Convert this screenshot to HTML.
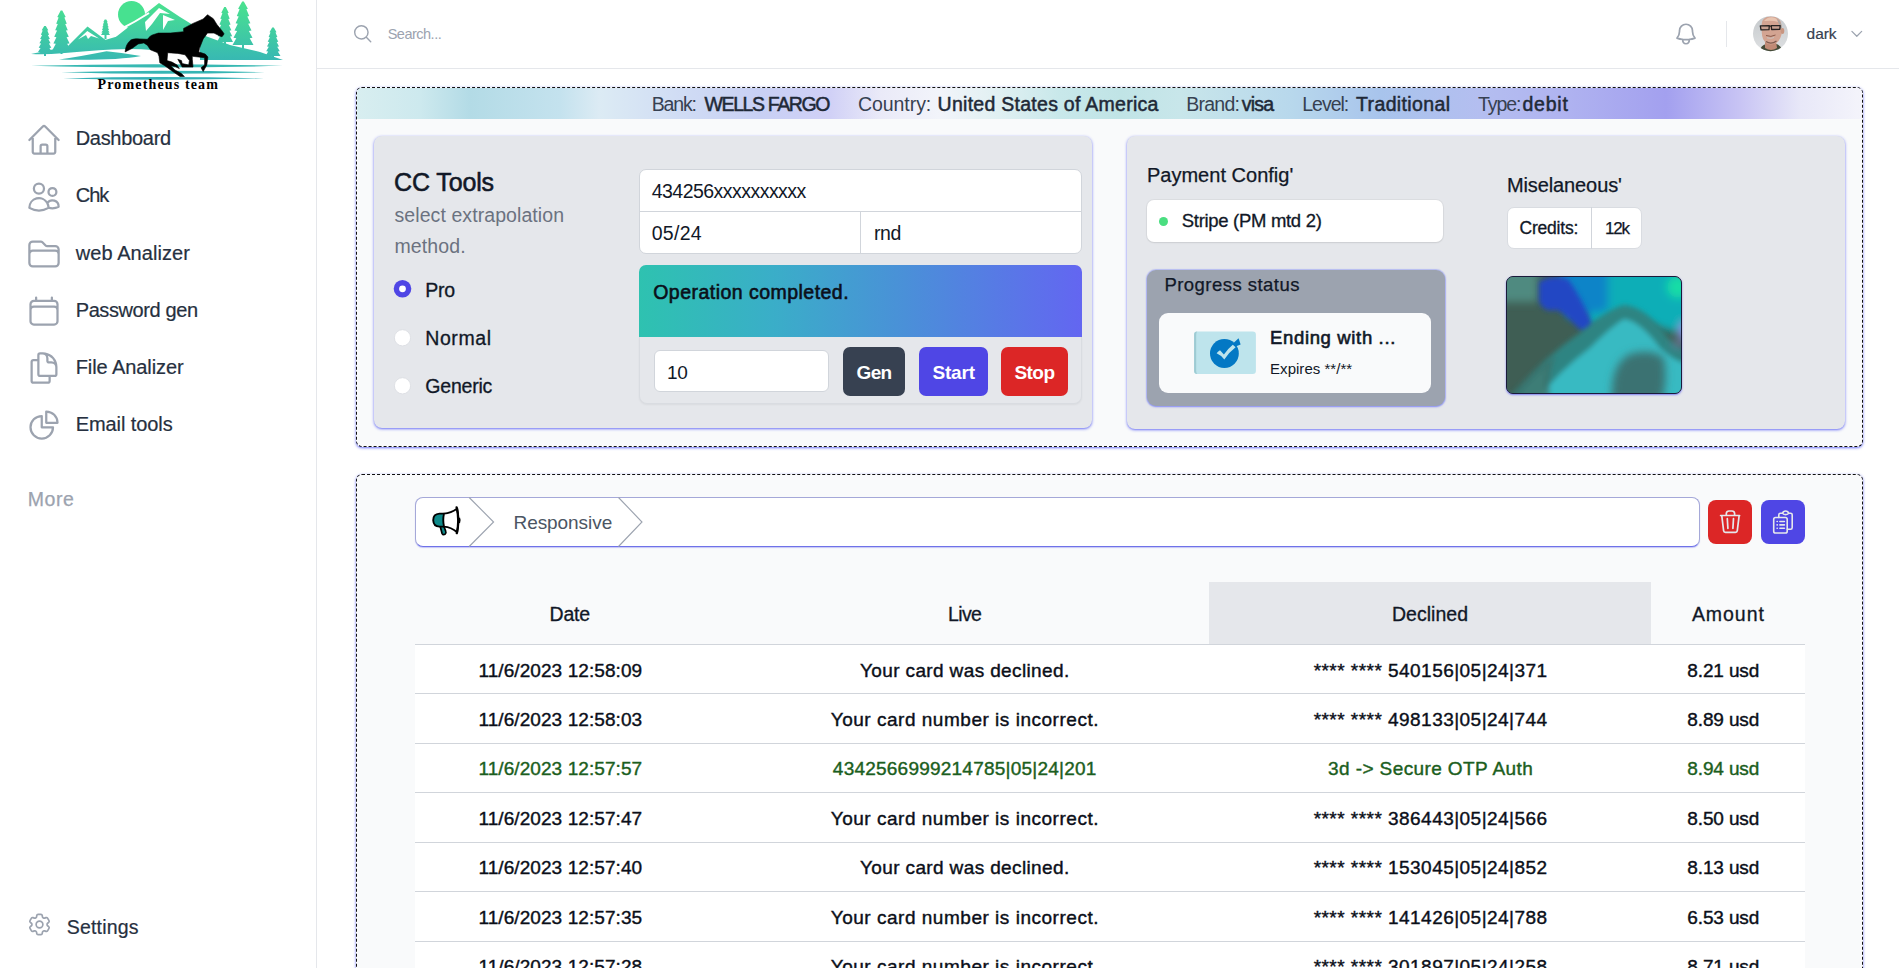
<!DOCTYPE html><html><head><meta charset="utf-8"><style>
html,body{margin:0;padding:0;width:1899px;height:968px;overflow:hidden;background:#fff;font-family:"Liberation Sans",sans-serif;}
.t{position:absolute;line-height:1;white-space:nowrap;}
.b{position:absolute;box-sizing:border-box;}
svg{position:absolute;overflow:visible;}
</style></head><body>
<div class="b" style="left:316px;top:0px;width:1px;height:968px;background:#e5e7eb;"></div>
<div class="b" style="left:317px;top:68px;width:1582px;height:1px;background:#e5e7eb;"></div>
<div class="t" style="left:75.70px;top:128.27px;font-size:20px;color:#263040;letter-spacing:-0.293px;-webkit-text-stroke:0.2px #263040;">Dashboard</div>
<svg style="left:26px;top:122px;" width="36" height="36" viewBox="0 0 24 24" fill="none" stroke="#9ca3af" stroke-width="1.5" stroke-linecap="round" stroke-linejoin="round"><path d="m2.25 12 8.954-8.955c.44-.439 1.152-.439 1.591 0L21.75 12M4.5 9.75v10.125c0 .621.504 1.125 1.125 1.125H9.75v-4.875c0-.621.504-1.125 1.125-1.125h2.25c.621 0 1.125.504 1.125 1.125V21h4.125c.621 0 1.125-.504 1.125-1.125V9.75M8.25 21h8.25"/></svg>
<div class="t" style="left:75.70px;top:185.41px;font-size:20px;color:#263040;letter-spacing:-0.984px;-webkit-text-stroke:0.2px #263040;">Chk</div>
<svg style="left:26px;top:179px;" width="36" height="36" viewBox="0 0 24 24" fill="none" stroke="#9ca3af" stroke-width="1.5" stroke-linecap="round" stroke-linejoin="round"><path d="M15 19.128a9.38 9.38 0 0 0 2.625.372 9.337 9.337 0 0 0 4.121-.952 4.125 4.125 0 0 0-7.533-2.493M15 19.128v-.003c0-1.113-.285-2.16-.786-3.07M15 19.128v.106A12.318 12.318 0 0 1 8.624 21c-2.331 0-4.512-.645-6.374-1.766l-.001-.109a6.375 6.375 0 0 1 11.964-3.07M12 6.375a3.375 3.375 0 1 1-6.75 0 3.375 3.375 0 0 1 6.75 0Zm8.25 2.25a2.625 2.625 0 1 1-5.25 0 2.625 2.625 0 0 1 5.25 0Z"/></svg>
<div class="t" style="left:75.70px;top:242.55px;font-size:20px;color:#263040;letter-spacing:0.082px;-webkit-text-stroke:0.2px #263040;">web Analizer</div>
<svg style="left:26px;top:236px;" width="36" height="36" viewBox="0 0 24 24" fill="none" stroke="#9ca3af" stroke-width="1.5" stroke-linecap="round" stroke-linejoin="round"><path d="M2.25 12.75V12A2.25 2.25 0 0 1 4.5 9.75h15A2.25 2.25 0 0 1 21.75 12v.75m-8.69-6.44-2.12-2.12a1.5 1.5 0 0 0-1.061-.44H4.5A2.25 2.25 0 0 0 2.25 6v12a2.25 2.25 0 0 0 2.25 2.25h15A2.25 2.25 0 0 0 21.75 18V9a2.25 2.25 0 0 0-2.25-2.25h-5.379a1.5 1.5 0 0 1-1.06-.44Z"/></svg>
<div class="t" style="left:75.70px;top:299.69px;font-size:20px;color:#263040;letter-spacing:-0.395px;-webkit-text-stroke:0.2px #263040;">Password gen</div>
<svg style="left:26px;top:293px;" width="36" height="36" viewBox="0 0 24 24" fill="none" stroke="#9ca3af" stroke-width="1.5" stroke-linecap="round" stroke-linejoin="round"><path d="M6.75 3v2.25M17.25 3v2.25M3 18.75V7.5a2.25 2.25 0 0 1 2.25-2.25h13.5A2.25 2.25 0 0 1 21 7.5v11.25m-18 0A2.25 2.25 0 0 0 5.25 21h13.5A2.25 2.25 0 0 0 21 18.75m-18 0v-7.5A2.25 2.25 0 0 1 5.25 9h13.5A2.25 2.25 0 0 1 21 11.25v7.5"/></svg>
<div class="t" style="left:75.70px;top:356.83px;font-size:20px;color:#263040;letter-spacing:-0.078px;-webkit-text-stroke:0.2px #263040;">File Analizer</div>
<svg style="left:26px;top:350px;" width="36" height="36" viewBox="0 0 24 24" fill="none" stroke="#9ca3af" stroke-width="1.5" stroke-linecap="round" stroke-linejoin="round"><path d="M15.75 17.25v3.375c0 .621-.504 1.125-1.125 1.125h-9.75a1.125 1.125 0 0 1-1.125-1.125V7.875c0-.621.504-1.125 1.125-1.125H6.75a9.06 9.06 0 0 1 1.5.124m7.5 10.376h3.375c.621 0 1.125-.504 1.125-1.125V11.25c0-4.46-3.243-8.161-7.5-8.876a9.06 9.06 0 0 0-1.5-.124H9.375c-.621 0-1.125.504-1.125 1.125v3.5m7.5 10.375H9.375a1.125 1.125 0 0 1-1.125-1.125v-9.25m12 6.625v-1.875a3.375 3.375 0 0 0-3.375-3.375h-1.5a1.125 1.125 0 0 1-1.125-1.125v-1.5a3.375 3.375 0 0 0-3.375-3.375H9.75"/></svg>
<div class="t" style="left:75.70px;top:413.97px;font-size:20px;color:#263040;letter-spacing:-0.082px;-webkit-text-stroke:0.2px #263040;">Email tools</div>
<svg style="left:26px;top:407px;" width="36" height="36" viewBox="0 0 24 24" fill="none" stroke="#9ca3af" stroke-width="1.5" stroke-linecap="round" stroke-linejoin="round"><path d="M10.5 6a7.5 7.5 0 1 0 7.5 7.5h-7.5V6Z M13.5 10.5H21A7.5 7.5 0 0 0 13.5 3v7.5Z"/></svg>
<div class="t" style="left:27.80px;top:489.99px;font-size:19.5px;color:#9ca3af;letter-spacing:0.523px;-webkit-text-stroke:0.25px #9ca3af;">More</div>
<div class="t" style="left:66.80px;top:918.39px;font-size:19.5px;color:#263040;letter-spacing:0.163px;-webkit-text-stroke:0.2px #263040;">Settings</div>
<svg style="left:25.85px;top:910.5px;" width="27" height="27" viewBox="0 0 24 24" fill="none" stroke="#9ca3af" stroke-width="1.5" stroke-linecap="round" stroke-linejoin="round"><path d="M9.594 3.94c.09-.542.56-.94 1.11-.94h2.593c.55 0 1.02.398 1.11.94l.213 1.281c.063.374.313.686.645.87.074.04.147.083.22.127.325.196.72.257 1.075.124l1.217-.456a1.125 1.125 0 0 1 1.37.49l1.296 2.247a1.125 1.125 0 0 1-.26 1.431l-1.003.827c-.293.241-.438.613-.43.992a7.723 7.723 0 0 1 0 .255c-.008.378.137.75.43.991l1.004.827c.424.35.534.955.26 1.43l-1.298 2.247a1.125 1.125 0 0 1-1.369.491l-1.217-.456c-.355-.133-.75-.072-1.076.124a6.47 6.47 0 0 1-.22.128c-.331.183-.581.495-.644.869l-.213 1.281c-.09.543-.56.94-1.11.94h-2.594c-.55 0-1.019-.398-1.11-.94l-.213-1.281c-.062-.374-.312-.686-.644-.87a6.52 6.52 0 0 1-.22-.127c-.325-.196-.72-.257-1.076-.124l-1.217.456a1.125 1.125 0 0 1-1.369-.49l-1.297-2.247a1.125 1.125 0 0 1 .26-1.431l1.004-.827c.292-.24.437-.613.43-.991a6.932 6.932 0 0 1 0-.255c.007-.38-.138-.751-.43-.992l-1.004-.827a1.125 1.125 0 0 1-.26-1.43l1.297-2.247a1.125 1.125 0 0 1 1.37-.491l1.216.456c.356.133.751.072 1.076-.124.072-.044.146-.086.22-.128.332-.183.582-.495.644-.869l.214-1.28Z M15 12a3 3 0 1 1-6 0 3 3 0 0 1 6 0Z"/></svg>
<svg style="left:352.2px;top:22.9px;" width="21.4" height="21.4" viewBox="0 0 24 24" fill="none" stroke="#9ca3af" stroke-width="1.6" stroke-linecap="round" stroke-linejoin="round"><path d="m21 21-5.197-5.197m0 0A7.5 7.5 0 1 0 5.196 5.196a7.5 7.5 0 0 0 10.607 10.607Z"/></svg>
<div class="t" style="left:387.70px;top:27.43px;font-size:14.5px;color:#9ca3af;letter-spacing:-0.504px;">Search...</div>
<svg style="left:1673px;top:21px;" width="26" height="26" viewBox="0 0 24 24" fill="none" stroke="#9ca3af" stroke-width="1.6" stroke-linecap="round" stroke-linejoin="round"><path d="M14.857 17.082a23.848 23.848 0 0 0 5.454-1.31A8.967 8.967 0 0 1 18 9.75V9A6 6 0 0 0 6 9v.75a8.967 8.967 0 0 1-2.312 6.022c1.733.64 3.56 1.085 5.455 1.31m5.714 0a24.255 24.255 0 0 1-5.714 0m5.714 0a3 3 0 1 1-5.714 0"/></svg>
<div class="b" style="left:1726px;top:21px;width:1px;height:26px;background:#e5e7eb;"></div>
<div class="t" style="left:1806.60px;top:25.68px;font-size:15.5px;color:#374151;letter-spacing:-0.051px;-webkit-text-stroke:0.2px #374151;">dark</div>
<svg style="left:1849.4px;top:26.1px;" width="15.6" height="15.6" viewBox="0 0 24 24" fill="none" stroke="#9ca3af" stroke-width="1.9" stroke-linecap="round" stroke-linejoin="round"><path d="m19.5 8.25-7.5 7.5-7.5-7.5"/></svg>
<div class="b" style="left:356px;top:87px;width:1507px;height:360px;background:#f9fafb;border:1px dashed #111;border-radius:6px;box-shadow:0 1px 3px 0 rgba(110,115,245,.9),0 1px 2px -1px rgba(110,115,245,.9);"></div>
<div class="b" style="left:357px;top:88px;width:1505px;height:31px;border-radius:5px 5px 0 0;background:linear-gradient(90deg,#d8eef0 0.0%,#cde9ee 4.2%,#b3dbe6 7.5%,#c4e2ee 13.5%,#dcebf4 16.1%,#d0dcf4 21.5%,#c8d0f4 26.8%,#d0d0f6 31.4%,#eaeaf8 34.8%,#f2f4fa 38.7%,#e0f0f2 42.7%,#c8e8ea 46.7%,#c0e4e6 50.7%,#c8e6ea 54.7%,#b8d8ec 62.0%,#a8c4ec 68.0%,#b4bef0 74.6%,#b0b4f0 79.9%,#a3a0ef 87.0%,#c8c4f4 91.9%,#e8e8f8 95.9%,#f4f4fb 100.0%);"></div>
<div class="b" style="left:374px;top:136px;width:718px;height:292px;background:#e5e7eb;border-radius:8px;box-shadow:0 1px 3px 0 rgba(110,115,245,.9),0 1px 2px -1px rgba(110,115,245,.9);"></div>
<div class="b" style="left:1127px;top:136px;width:718px;height:293px;background:#e5e7eb;border-radius:8px;box-shadow:0 1px 3px 0 rgba(110,115,245,.9),0 1px 2px -1px rgba(110,115,245,.9);"></div>
<div class="b" style="left:356px;top:474px;width:1507px;height:520px;background:#f9fafb;border:1px dashed #111;border-radius:6px;box-shadow:0 1px 3px 0 rgba(110,115,245,.9),0 1px 2px -1px rgba(110,115,245,.9);"></div>
<div class="t" style="left:651.80px;top:94.59px;font-size:19.5px;color:#374151;letter-spacing:-1.191px;">Bank:</div>
<div class="t" style="left:704.50px;top:94.59px;font-size:19.5px;color:#1f2937;letter-spacing:-1.379px;-webkit-text-stroke:0.5px #1f2937;">WELLS FARGO</div>
<div class="t" style="left:857.90px;top:94.59px;font-size:19.5px;color:#374151;letter-spacing:-0.043px;">Country:</div>
<div class="t" style="left:937.60px;top:94.59px;font-size:19.5px;color:#1f2937;letter-spacing:0.269px;-webkit-text-stroke:0.5px #1f2937;">United States of America</div>
<div class="t" style="left:1186.20px;top:94.59px;font-size:19.5px;color:#374151;letter-spacing:-0.731px;">Brand:</div>
<div class="t" style="left:1241.70px;top:94.59px;font-size:19.5px;color:#1f2937;letter-spacing:-0.759px;-webkit-text-stroke:0.5px #1f2937;">visa</div>
<div class="t" style="left:1302.20px;top:94.59px;font-size:19.5px;color:#374151;letter-spacing:-0.987px;">Level:</div>
<div class="t" style="left:1356.00px;top:94.59px;font-size:19.5px;color:#1f2937;letter-spacing:0.368px;-webkit-text-stroke:0.5px #1f2937;">Traditional</div>
<div class="t" style="left:1477.90px;top:94.59px;font-size:19.5px;color:#374151;letter-spacing:-1.049px;">Type:</div>
<div class="t" style="left:1522.50px;top:94.59px;font-size:19.5px;color:#1f2937;letter-spacing:0.753px;-webkit-text-stroke:0.5px #1f2937;">debit</div>
<div class="t" style="left:394.10px;top:170.34px;font-size:25px;color:#111827;letter-spacing:-0.138px;-webkit-text-stroke:0.55px #111827;">CC Tools</div>
<div class="t" style="left:394.50px;top:205.69px;font-size:19.5px;color:#6b7280;letter-spacing:0.078px;">select extrapolation</div>
<div class="t" style="left:394.50px;top:236.79px;font-size:19.5px;color:#6b7280;letter-spacing:0.103px;">method.</div>
<svg style="left:390px;top:276px" width="26" height="26" viewBox="0 0 26 26"><circle cx="12.5" cy="12.8" r="8.8" fill="#4f46e5"/><circle cx="12.5" cy="12.8" r="3.4" fill="#fff"/></svg>
<svg style="left:390px;top:324.7px" width="26" height="26" viewBox="0 0 26 26"><circle cx="12.5" cy="12.8" r="8.1" fill="#fff" stroke="#d9dce1" stroke-width="0.8"/></svg>
<svg style="left:390px;top:372.9px" width="26" height="26" viewBox="0 0 26 26"><circle cx="12.5" cy="12.8" r="8.1" fill="#fff" stroke="#d9dce1" stroke-width="0.8"/></svg>
<div class="t" style="left:425.30px;top:281.09px;font-size:19.5px;color:#111827;letter-spacing:-0.228px;-webkit-text-stroke:0.3px #111827;">Pro</div>
<div class="t" style="left:425.30px;top:328.79px;font-size:19.5px;color:#111827;letter-spacing:0.571px;-webkit-text-stroke:0.3px #111827;">Normal</div>
<div class="t" style="left:425.30px;top:376.69px;font-size:19.5px;color:#111827;letter-spacing:-0.213px;-webkit-text-stroke:0.3px #111827;">Generic</div>
<div class="b" style="left:639px;top:169px;width:443px;height:85px;background:#fff;border:1px solid #d1d5db;border-radius:7px;"></div>
<div class="b" style="left:640px;top:211px;width:441px;height:1px;background:#d1d5db;"></div>
<div class="b" style="left:860px;top:212px;width:1px;height:41px;background:#d1d5db;"></div>
<div class="t" style="left:651.70px;top:181.69px;font-size:19.5px;color:#111827;letter-spacing:-0.531px;">434256xxxxxxxxxx</div>
<div class="t" style="left:651.70px;top:223.99px;font-size:19.5px;color:#111827;letter-spacing:0.300px;">05/24</div>
<div class="t" style="left:874.00px;top:223.99px;font-size:19.5px;color:#111827;letter-spacing:-0.423px;">rnd</div>
<div class="b" style="left:639px;top:265px;width:443px;height:72px;border-radius:7px 7px 0 0;background:linear-gradient(90deg,#2ec2b0 0%,#3aaec8 30%,#4a90d8 60%,#6366f1 100%);"></div>
<div class="t" style="left:653.20px;top:282.89px;font-size:19.5px;color:#0b0f19;letter-spacing:0.471px;-webkit-text-stroke:0.6px #0b0f19;">Operation completed.</div>
<div class="b" style="left:639px;top:337px;width:443px;height:67px;background:#e5e7eb;border:1px solid #d9dce1;border-top:none;border-radius:0 0 8px 8px;box-shadow:0 1px 2px rgba(0,0,0,.05);"></div>
<div class="b" style="left:653.5px;top:349.5px;width:175.5px;height:42.5px;background:#fff;border:1px solid #d1d5db;border-radius:6px;"></div>
<div class="t" style="left:667.10px;top:362.52px;font-size:19px;color:#111827;letter-spacing:-0.423px;">10</div>
<div class="b" style="left:843px;top:347px;width:62px;height:49px;background:#374151;border-radius:7px;"></div>
<div class="b" style="left:919px;top:347px;width:69px;height:49px;background:#4f46e5;border-radius:7px;"></div>
<div class="b" style="left:1001px;top:347px;width:67px;height:49px;background:#dc2626;border-radius:7px;"></div>
<div class="t" style="left:856.60px;top:362.92px;font-size:19px;color:#fff;letter-spacing:-0.726px;font-weight:700;">Gen</div>
<div class="t" style="left:932.40px;top:362.92px;font-size:19px;color:#fff;letter-spacing:-0.173px;font-weight:700;">Start</div>
<div class="t" style="left:1014.40px;top:362.92px;font-size:19px;color:#fff;letter-spacing:-0.538px;font-weight:700;">Stop</div>
<div class="t" style="left:1146.90px;top:165.27px;font-size:20px;color:#111827;letter-spacing:0.020px;-webkit-text-stroke:0.25px #111827;">Payment Config'</div>
<div class="b" style="left:1147px;top:200px;width:296px;height:42px;background:#fff;border-radius:7px;box-shadow:0 0 0 1px rgba(0,0,0,.04),0 1px 2px rgba(0,0,0,.08);"></div>
<div class="b" style="left:1158.8px;top:216.6px;width:9px;height:9px;border-radius:50%;background:#4ade80;"></div>
<div class="t" style="left:1181.80px;top:212.24px;font-size:18.5px;color:#111827;letter-spacing:-0.309px;-webkit-text-stroke:0.3px #111827;">Stripe (PM mtd 2)</div>
<div class="b" style="left:1146.5px;top:269.5px;width:298px;height:136.5px;background:#9ca3af;border-radius:9px;box-shadow:0 0 1px 1px rgba(129,140,248,.45),0 1px 2px rgba(99,102,241,.6);"></div>
<div class="t" style="left:1164.40px;top:276.04px;font-size:18.5px;color:#111827;letter-spacing:0.462px;-webkit-text-stroke:0.25px #111827;">Progress status</div>
<div class="b" style="left:1159px;top:313px;width:272px;height:80px;background:#f9fafb;border-radius:9px;"></div>
<svg style="left:1193px;top:331px" width="64" height="45" viewBox="0 0 64 45">
<rect x="1.1" y="0.5" width="61.8" height="42.4" rx="3.2" fill="#bee4ec"/>
<path d="M4.3,0.5 Q1.1,0.5 1.1,3.7 V39.7 Q1.1,42.9 4.3,42.9 Q3.2,42 3.2,39.7 V3.7 Q3.2,1.2 4.3,0.5Z" fill="#9ecbd3"/>
<circle cx="31.4" cy="22.5" r="14.4" fill="#0378c4"/>
<path d="M23.6,22.2 Q25.2,20.4 27,19.2 L30.9,23.6 Q35,17.6 39.8,13.8 L42.6,16.2 Q36.2,21 31.3,28.4 Q28.2,24.2 23.6,22.2Z" fill="#bee4ec"/>
<path d="M39.6,12.8 L45.6,7.2 L47.6,13.6 L43.2,15.2Z" fill="#0378c4"/>
</svg>
<div class="t" style="left:1270.10px;top:328.94px;font-size:18.5px;color:#111827;letter-spacing:0.643px;-webkit-text-stroke:0.6px #111827;">Ending with ...</div>
<div class="t" style="left:1270.10px;top:361.10px;font-size:15px;color:#111827;letter-spacing:0.025px;">Expires **/**</div>
<div class="t" style="left:1506.90px;top:174.87px;font-size:20px;color:#111827;letter-spacing:-0.101px;-webkit-text-stroke:0.25px #111827;">Miselaneous'</div>
<div class="b" style="left:1507px;top:206.5px;width:135px;height:42.5px;background:#fff;border:1px solid #d9dce1;border-radius:7px;"></div>
<div class="b" style="left:1591px;top:207px;width:1px;height:41.5px;background:#d1d5db;"></div>
<div class="t" style="left:1519.60px;top:219.69px;font-size:17.5px;color:#111827;letter-spacing:-0.228px;-webkit-text-stroke:0.3px #111827;">Credits:</div>
<div class="t" style="left:1604.90px;top:220.11px;font-size:17px;color:#111827;letter-spacing:-1.155px;-webkit-text-stroke:0.25px #111827;">12k</div>
<div class="b" style="left:415px;top:497px;width:1285px;height:50px;background:#fff;border:1px solid #a5a8d8;border-bottom-color:#6f72e8;border-radius:8px;box-shadow:0 1px 1px rgba(99,102,241,.35);"></div>
<svg style="left:415px;top:497px" width="240" height="50" viewBox="0 0 240 50">
<path d="M54.2 0.5 L78.6 25 L54.2 49.5" fill="none" stroke="#9ca3af" stroke-width="1.1"/>
<path d="M203.5 0.5 L227 25 L203.5 49.5" fill="none" stroke="#9ca3af" stroke-width="1.1"/>
</svg>
<svg style="left:430px;top:505px" width="34" height="32" viewBox="0 0 34 32">
<path d="M10.3,21.8 L12,28.3 Q13,30.3 15,29.3 Q16.5,28.3 15.8,26.5 L14,21.5" fill="#0e8a8a" stroke="#000" stroke-width="1.7" stroke-linejoin="round"/>
<path d="M14,8.6 L9.5,8.6 Q3.2,9 3.2,15.2 Q3.5,21.5 9.5,21.6 L14,21.6 Z" fill="#0e8a8a" stroke="#000" stroke-width="1.9" stroke-linejoin="round"/>
<path d="M14,8.6 Q21,8.3 27.2,3.5 Q29.5,15 27.2,27.3 Q21,22 14,21.6 Q12.5,15 14,8.6 Z" fill="#fff" stroke="#000" stroke-width="1.9" stroke-linejoin="round"/>
<path d="M26.6,2.3 Q29.8,15 26.8,28.2" fill="none" stroke="#000" stroke-width="2.3" stroke-linecap="round"/>
<path d="M29.2,12.8 Q30.4,15.2 29.2,18" fill="none" stroke="#000" stroke-width="1.8"/>
</svg>
<div class="t" style="left:513.50px;top:512.52px;font-size:19px;color:#4b5563;letter-spacing:-0.064px;">Responsive</div>
<div class="b" style="left:1708px;top:500px;width:44px;height:44px;background:#dc2626;border-radius:8px;"></div>
<div class="b" style="left:1761px;top:500px;width:44px;height:44px;background:#4f46e5;border-radius:8px;"></div>
<svg style="left:1718px;top:510px" width="24" height="24" viewBox="0 0 24 24" fill="none" stroke="#e5e7eb" stroke-width="1.7" stroke-linecap="round" stroke-linejoin="round">
<path d="M2.6 5.5 H21.6 M3.8 5.8 L5.6 20.6 Q5.8 22.3 7.4 22.3 H17.5 Q19.1 22.3 19.3 20.6 L21.1 5.8 M8.3 5.2 V3.4 Q8.6 1 11 1 H14 Q16.4 1 16.6 3.4 V5.2 M9.3 8.6 L9.9 18.4 M15.5 8.6 L14.9 18.4"/>
</svg>
<svg style="left:1771px;top:510px" width="24" height="24" viewBox="0 0 24 24" fill="none" stroke="#e5e7eb" stroke-width="1.6" stroke-linecap="round" stroke-linejoin="round">
<path d="M7.8 7.4 V4.8 Q7.8 3.2 9.4 3.2 H11.6 Q12.2 1 14.6 1 Q17 1 17.6 3.2 H19.6 Q21.2 3.2 21.2 4.8 V17.6 Q21.2 19.3 19.6 19.3 H16.4"/>
<path d="M11.7 3.4 Q12 4.6 14.6 4.6 Q17.2 4.6 17.5 3.4"/>
<rect x="2.7" y="7.5" width="13.5" height="15.5" rx="1.8"/>
<path d="M6.1 11.5 H6.3 M8.9 11.5 H13.4 M6.1 14.9 H6.3 M8.9 14.9 H13.4 M6.1 18.3 H6.3 M8.9 18.3 H13.4"/>
</svg>
<div class="b" style="left:1209px;top:582px;width:442px;height:62px;background:#e5e7eb;"></div>
<div class="b" style="left:415px;top:644px;width:1390px;height:330px;background:#fff;"></div>
<div class="t" style="left:549.50px;top:605.09px;font-size:19.5px;color:#111827;letter-spacing:-0.164px;-webkit-text-stroke:0.3px #111827;">Date</div>
<div class="t" style="left:948.10px;top:605.09px;font-size:19.5px;color:#111827;letter-spacing:-0.691px;-webkit-text-stroke:0.3px #111827;">Live</div>
<div class="t" style="left:1391.90px;top:605.09px;font-size:19.5px;color:#111827;letter-spacing:0.032px;-webkit-text-stroke:0.3px #111827;">Declined</div>
<div class="t" style="left:1691.90px;top:605.09px;font-size:19.5px;color:#111827;letter-spacing:0.959px;-webkit-text-stroke:0.3px #111827;">Amount</div>
<div class="b" style="left:415px;top:644px;width:1390px;height:1px;background:#d1d5db;"></div>
<div class="t" style="left:478.40px;top:660.52px;font-size:19px;color:#0b0f19;letter-spacing:0.085px;-webkit-text-stroke:0.4px #0b0f19;">11/6/2023 12:58:09</div>
<div class="t" style="left:860.00px;top:660.52px;font-size:19px;color:#0b0f19;letter-spacing:0.371px;-webkit-text-stroke:0.4px #0b0f19;">Your card was declined.</div>
<div class="t" style="left:1313.65px;top:660.52px;font-size:19px;color:#0b0f19;letter-spacing:0.465px;-webkit-text-stroke:0.4px #0b0f19;">**** **** 540156|05|24|371</div>
<div class="t" style="left:1687.30px;top:660.52px;font-size:19px;color:#0b0f19;letter-spacing:-0.128px;-webkit-text-stroke:0.4px #0b0f19;">8.21 usd</div>
<div class="b" style="left:415px;top:693px;width:1390px;height:1px;background:#d1d5db;"></div>
<div class="t" style="left:478.40px;top:709.95px;font-size:19px;color:#0b0f19;letter-spacing:0.085px;-webkit-text-stroke:0.4px #0b0f19;">11/6/2023 12:58:03</div>
<div class="t" style="left:830.70px;top:709.95px;font-size:19px;color:#0b0f19;letter-spacing:0.519px;-webkit-text-stroke:0.4px #0b0f19;">Your card number is incorrect.</div>
<div class="t" style="left:1313.65px;top:709.95px;font-size:19px;color:#0b0f19;letter-spacing:0.465px;-webkit-text-stroke:0.4px #0b0f19;">**** **** 498133|05|24|744</div>
<div class="t" style="left:1687.30px;top:709.95px;font-size:19px;color:#0b0f19;letter-spacing:-0.128px;-webkit-text-stroke:0.4px #0b0f19;">8.89 usd</div>
<div class="b" style="left:415px;top:743px;width:1390px;height:1px;background:#d1d5db;"></div>
<div class="t" style="left:478.40px;top:759.38px;font-size:19px;color:#1b5e20;letter-spacing:0.085px;-webkit-text-stroke:0.4px #1b5e20;">11/6/2023 12:57:57</div>
<div class="t" style="left:832.85px;top:759.38px;font-size:19px;color:#1b5e20;letter-spacing:0.226px;-webkit-text-stroke:0.4px #1b5e20;">4342566999214785|05|24|201</div>
<div class="t" style="left:1328.10px;top:759.38px;font-size:19px;color:#1b5e20;letter-spacing:0.399px;-webkit-text-stroke:0.4px #1b5e20;">3d -&gt; Secure OTP Auth</div>
<div class="t" style="left:1687.30px;top:759.38px;font-size:19px;color:#1b5e20;letter-spacing:-0.128px;-webkit-text-stroke:0.4px #1b5e20;">8.94 usd</div>
<div class="b" style="left:415px;top:792px;width:1390px;height:1px;background:#d1d5db;"></div>
<div class="t" style="left:478.40px;top:808.81px;font-size:19px;color:#0b0f19;letter-spacing:0.085px;-webkit-text-stroke:0.4px #0b0f19;">11/6/2023 12:57:47</div>
<div class="t" style="left:830.70px;top:808.81px;font-size:19px;color:#0b0f19;letter-spacing:0.519px;-webkit-text-stroke:0.4px #0b0f19;">Your card number is incorrect.</div>
<div class="t" style="left:1313.65px;top:808.81px;font-size:19px;color:#0b0f19;letter-spacing:0.465px;-webkit-text-stroke:0.4px #0b0f19;">**** **** 386443|05|24|566</div>
<div class="t" style="left:1687.30px;top:808.81px;font-size:19px;color:#0b0f19;letter-spacing:-0.128px;-webkit-text-stroke:0.4px #0b0f19;">8.50 usd</div>
<div class="b" style="left:415px;top:842px;width:1390px;height:1px;background:#d1d5db;"></div>
<div class="t" style="left:478.40px;top:858.24px;font-size:19px;color:#0b0f19;letter-spacing:0.085px;-webkit-text-stroke:0.4px #0b0f19;">11/6/2023 12:57:40</div>
<div class="t" style="left:860.00px;top:858.24px;font-size:19px;color:#0b0f19;letter-spacing:0.371px;-webkit-text-stroke:0.4px #0b0f19;">Your card was declined.</div>
<div class="t" style="left:1313.65px;top:858.24px;font-size:19px;color:#0b0f19;letter-spacing:0.465px;-webkit-text-stroke:0.4px #0b0f19;">**** **** 153045|05|24|852</div>
<div class="t" style="left:1687.30px;top:858.24px;font-size:19px;color:#0b0f19;letter-spacing:-0.128px;-webkit-text-stroke:0.4px #0b0f19;">8.13 usd</div>
<div class="b" style="left:415px;top:891px;width:1390px;height:1px;background:#d1d5db;"></div>
<div class="t" style="left:478.40px;top:907.67px;font-size:19px;color:#0b0f19;letter-spacing:0.085px;-webkit-text-stroke:0.4px #0b0f19;">11/6/2023 12:57:35</div>
<div class="t" style="left:830.70px;top:907.67px;font-size:19px;color:#0b0f19;letter-spacing:0.519px;-webkit-text-stroke:0.4px #0b0f19;">Your card number is incorrect.</div>
<div class="t" style="left:1313.65px;top:907.67px;font-size:19px;color:#0b0f19;letter-spacing:0.465px;-webkit-text-stroke:0.4px #0b0f19;">**** **** 141426|05|24|788</div>
<div class="t" style="left:1687.30px;top:907.67px;font-size:19px;color:#0b0f19;letter-spacing:-0.128px;-webkit-text-stroke:0.4px #0b0f19;">6.53 usd</div>
<div class="b" style="left:415px;top:941px;width:1390px;height:1px;background:#d1d5db;"></div>
<div class="t" style="left:478.40px;top:957.10px;font-size:19px;color:#0b0f19;letter-spacing:0.085px;-webkit-text-stroke:0.4px #0b0f19;">11/6/2023 12:57:28</div>
<div class="t" style="left:830.70px;top:957.10px;font-size:19px;color:#0b0f19;letter-spacing:0.519px;-webkit-text-stroke:0.4px #0b0f19;">Your card number is incorrect.</div>
<div class="t" style="left:1313.65px;top:957.10px;font-size:19px;color:#0b0f19;letter-spacing:0.465px;-webkit-text-stroke:0.4px #0b0f19;">**** **** 301897|05|24|258</div>
<div class="t" style="left:1687.30px;top:957.10px;font-size:19px;color:#0b0f19;letter-spacing:-0.128px;-webkit-text-stroke:0.4px #0b0f19;">8.71 usd</div>
<svg style="left:0;top:0" width="300" height="95" viewBox="0 0 300 95"><circle cx="131.5" cy="14.5" r="13.5" fill="#47e190"/><path d="M112,40 L140,18 L159,3 L180,17 L206,33 L206,45 L112,45Z" fill="url(#lgg)"/><path d="M145,22 L159,8 L170,14 L160,13 L152,24 L146,31 Z M163,15 L175,20 L168,21 L163,30 Z" fill="#fff"/><path d="M121,29 Q135,22 149,13" stroke="#fff" stroke-width="2" fill="none"/><path d="M68,46 L87.5,26.5 L107,41 L107,48 L68,48Z" fill="url(#lgg)"/><path d="M78,39.5 L87.3,31 L99,38.5 L91,36 L88,39 L86,35 Z" fill="#fff"/><defs><linearGradient id="lgg" gradientUnits="userSpaceOnUse" x1="0" y1="0" x2="0" y2="62"><stop offset="0" stop-color="#4be48d"/><stop offset="1" stop-color="#37b7b4"/></linearGradient></defs><path d="M31,54 Q50,50 70,46 L105,40 Q118,36 130,34 L152,40 L152,50 Q135,48.5 112,49.5 Q85,51 62,53.2 Q45,55 31,54 Z" fill="url(#lgg)"/><path d="M59,59.6 Q85,55.5 106.5,51.2 Q125,53 141,56 Q115,60.8 59,59.6 Z" fill="url(#lgg)"/><path d="M200,34 L230,45 L260,52 L283,60 L200,60Z" fill="url(#lgg)"/><path d="M44.2,26.0 L45.8,26.0 L48.3,30.3 L47.3,30.6 L49.1,34.7 L47.9,34.9 L49.9,39.0 L48.4,39.3 L50.6,43.3 L48.9,43.6 L51.3,47.7 L49.4,47.9 L52.0,52.0 L46.0,52.0 L46.0,56.0 L44.0,56.0 L44.0,52.0 L38.0,52.0 L40.6,47.9 L38.7,47.7 L41.1,43.6 L39.4,43.3 L41.6,39.3 L40.1,39.0 L42.1,34.9 L40.9,34.7 L42.7,30.6 L41.7,30.3Z" fill="url(#lgg)"/><path d="M60.7,10.5 L62.3,10.5 L65.7,17.1 L64.4,17.5 L66.8,23.7 L65.2,24.1 L67.8,30.2 L65.9,30.6 L68.8,36.8 L66.6,37.2 L69.6,43.4 L67.2,43.8 L70.5,50.0 L62.5,50.0 L62.5,54.0 L60.5,54.0 L60.5,50.0 L52.5,50.0 L55.8,43.8 L53.4,43.4 L56.4,37.2 L54.2,36.8 L57.1,30.6 L55.2,30.2 L57.8,24.1 L56.2,23.7 L58.6,17.5 L57.3,17.1Z" fill="url(#lgg)"/><path d="M104.7,19.5 L106.3,19.5 L107.6,22.1 L107.0,22.2 L108.2,24.7 L107.4,24.8 L108.7,27.2 L107.7,27.4 L109.1,29.8 L108.0,30.0 L109.6,32.4 L108.4,32.6 L110.0,35.0 L106.5,35.0 L106.5,39.0 L104.5,39.0 L104.5,35.0 L101.0,35.0 L102.6,32.6 L101.4,32.4 L103.0,30.0 L101.9,29.8 L103.3,27.4 L102.3,27.2 L103.6,24.8 L102.8,24.7 L104.0,22.2 L103.4,22.1Z" fill="url(#lgg)"/><path d="M224.2,7.0 L225.8,7.0 L228.7,12.8 L227.6,13.2 L229.7,18.7 L228.3,19.0 L230.6,24.5 L228.9,24.9 L231.4,30.3 L229.5,30.7 L232.2,36.2 L230.1,36.5 L233.0,42.0 L226.0,42.0 L226.0,46.0 L224.0,46.0 L224.0,42.0 L217.0,42.0 L219.9,36.5 L217.8,36.2 L220.5,30.7 L218.6,30.3 L221.1,24.9 L219.4,24.5 L221.7,19.0 L220.3,18.7 L222.4,13.2 L221.3,12.8Z" fill="url(#lgg)"/><path d="M242.2,1.5 L243.8,1.5 L247.9,8.8 L246.4,9.2 L249.2,16.0 L247.3,16.4 L250.4,23.2 L248.2,23.7 L251.5,30.5 L248.9,30.9 L252.5,37.8 L249.7,38.2 L253.5,45.0 L244.0,45.0 L244.0,49.0 L242.0,49.0 L242.0,45.0 L232.5,45.0 L236.3,38.2 L233.5,37.8 L237.1,30.9 L234.5,30.5 L237.8,23.7 L235.6,23.2 L238.7,16.4 L236.8,16.0 L239.6,9.2 L238.1,8.8Z" fill="url(#lgg)"/><path d="M272.2,27.5 L273.8,27.5 L276.5,32.2 L275.5,32.5 L277.4,37.0 L276.1,37.3 L278.3,41.8 L276.7,42.0 L279.0,46.5 L277.2,46.8 L279.8,51.2 L277.8,51.5 L280.5,56.0 L274.0,56.0 L274.0,60.0 L272.0,60.0 L272.0,56.0 L265.5,56.0 L268.2,51.5 L266.2,51.2 L268.8,46.8 L267.0,46.5 L269.3,42.0 L267.7,41.8 L269.9,37.3 L268.6,37.0 L270.5,32.5 L269.5,32.2Z" fill="url(#lgg)"/><path d="M31,65.8 Q150,62.6 283,65.8 Q150,69 31,65.8Z" fill="#38b9b3"/><path d="M61,72.2 Q160,69.2 265,72.2 Q160,75.2 61,72.2Z" fill="#36b5b4"/><path d="M63,78.4 Q160,75.8 264,78.4 Q160,81 63,78.4Z" fill="#34b0b5"/><path d="M125.1,51.9 C125.5,47 127,43 130.8,40 C134,38.6 137,38.8 139,38.9 L147.5,39.3 C149,37 151,35.5 152.5,34.9 L158.3,33.1 L170.6,33 L183.6,31.7 L183.6,28.4 L193,23.4 L203.2,19 L207.5,14.7 L213.3,18.7 L216.9,24.5 L222.7,31.7 L224.1,33.9 L222,36.8 L219.8,36 L214,33.1 L207.5,33.1 L203.2,38.9 L199.5,48.3 L198.8,51.9 L205.3,54.1 L207.9,57 L206.8,65 L203.2,71.5 L201,67.8 L204.6,65 L204.6,57.7 L192.3,56.3 L192.3,59.2 L193,67.1 L182.2,67.1 L179.3,62.1 L177.8,59.2 L181.5,60.6 L182.2,63.5 L188.7,65 L189.4,60.6 L185.1,54.8 L177.8,53.4 L167.7,52.7 L167,60.6 L172,62.1 L177.1,65 L179.3,68.6 L175,66.4 L170.6,65.7 L175,70 L181.5,73.6 L184.4,76.5 L180,76.5 L170.6,70 L164.8,65.7 L159.8,62.8 L159,56.3 L157.6,52.7 L150.4,49.8 L147.5,45.4 L143.9,42.9 L138.1,44 L132.3,48.3 Z" fill="#000" stroke="#000" stroke-width="0.6" stroke-linejoin="round"/></svg>
<div class="t" style="left:97.5px;top:77.5px;font-family:'Liberation Serif',serif;font-weight:700;font-size:14px;letter-spacing:1.15px;color:#000;line-height:1;">Prometheus team</div>
<svg style="left:1752px;top:15px" width="37" height="37" viewBox="0 0 37 37">
<defs><clipPath id="av"><circle cx="18.5" cy="18.7" r="17.5"/></clipPath>
<linearGradient id="avbg" x1="0" y1="0" x2="0" y2="1"><stop offset="0" stop-color="#c4c8cb"/><stop offset="1" stop-color="#dfe1e3"/></linearGradient>
<filter id="avb"><feGaussianBlur stdDeviation=".5"/></filter></defs>
<g clip-path="url(#av)">
<rect width="37" height="37" fill="url(#avbg)"/>
<g filter="url(#avb)">
<path d="M7,37 Q9,30 14,29 L24,29 Q29,30 31,37Z" fill="#444c38"/>
<path d="M13,26 L24,26 L25,33 Q19,37 13,33Z" fill="#c08a74"/>
<path d="M9.5,10 Q9.5,1.5 19,1.5 Q28.5,1.5 29.5,10 L30,17 Q29,24 25,27.5 Q19,31 14,28 Q10,24 9.8,18Z" fill="#d3a492"/>
<path d="M12,6 Q15,2 20,2.2 Q25,2.5 26,7 Q21,5 12,6Z" fill="#e8c4b0"/>
<path d="M25,4 Q29,6 30,13 L28,14 Q27,8 25,4Z" fill="#a9a6a2"/>
<ellipse cx="30.5" cy="16" rx="1.8" ry="3" fill="#c89580"/>
<path d="M8.3,10.9 L17.3,10.7 L17,14.6 L9,14.8Z M19.3,10.7 L28.2,10.6 L27.8,14.3 L19.6,14.5Z" fill="#c7a090" stroke="#262220" stroke-width="1.3" stroke-linejoin="round"/>
<path d="M17.3,11.2 L19.3,11.1" stroke="#262220" stroke-width="1.2"/>
<path d="M14,20.5 Q19,22.5 23.5,20" stroke="#8a5a4a" stroke-width="1" fill="none"/>
<path d="M15,22.8 Q19,24 22,22.5" stroke="#c9c2bf" stroke-width="1" fill="none"/>
<path d="M14,26.5 Q19,30 24.5,26" stroke="#5a3a30" stroke-width="1.4" fill="none" opacity=".7"/>
</g>
</g></svg>
<div class="b" style="left:1506px;top:276px;width:176px;height:118px;border:1.5px solid #1b1b3a;border-radius:7px;overflow:hidden;box-shadow:0 1px 2px rgba(99,102,241,.8);background:#3f6058;">
<svg style="left:-1.5px;top:-1.5px" width="176" height="118" viewBox="0 0 176 118">
<defs><filter id="bl" x="-20%" y="-20%" width="140%" height="140%"><feGaussianBlur stdDeviation="4"/></filter>
<filter id="bl2" x="-20%" y="-20%" width="140%" height="140%"><feGaussianBlur stdDeviation="2.8"/></filter></defs>
<rect width="176" height="118" fill="#3f5e54"/>
<g filter="url(#bl)">
<rect x="-10" y="-10" width="42" height="36" fill="#4f8a80"/>
<path d="M80,-10 L190,-10 L190,62 L120,42 L80,52 Z" fill="#0caeb7"/>
<path d="M50,-10 L102,-10 L102,34 L62,42 Z" fill="#0e84c8"/>
<circle cx="172" cy="11" r="11" fill="#12dda6"/>
<ellipse cx="179" cy="56" rx="6" ry="11" fill="#8a86e6"/>
</g>
<g filter="url(#bl2)">
<path d="M33,6 Q45,-2 62,3 Q76,22 88,52 Q80,60 70,50 Q58,36 50,34 Q37,37 33,25 Z" fill="#2346c4"/>
</g>
<g filter="url(#bl2)">
<path d="M-5,125 L8,116 Q40,80 75,56 Q100,34 117.5,29 Q140,30 162,62 Q170,70 180,74 L180,125 Z" fill="#2d8482"/>
<path d="M30,125 Q52,96 84,72 Q106,50 118,43 Q134,45 154,72 Q165,83 180,88 L180,125 Z" fill="#39bac2"/>
<path d="M-5,125 L8,116 Q30,92 50,80 Q40,100 45,125 Z" fill="#3d6f66" opacity=".7"/>
<path d="M10,125 Q22,105 40,92 Q36,110 38,125 Z" fill="#3f7f78" opacity=".8"/>
</g>
<g filter="url(#bl)">
<path d="M106,125 Q104,88 124,78 Q146,72 158,82 Q162,104 156,125 Z" fill="#3a7272"/>
<ellipse cx="172" cy="68" rx="6" ry="5" fill="#6d7a9e" opacity=".8"/>
</g>
</svg></div>
</body></html>
